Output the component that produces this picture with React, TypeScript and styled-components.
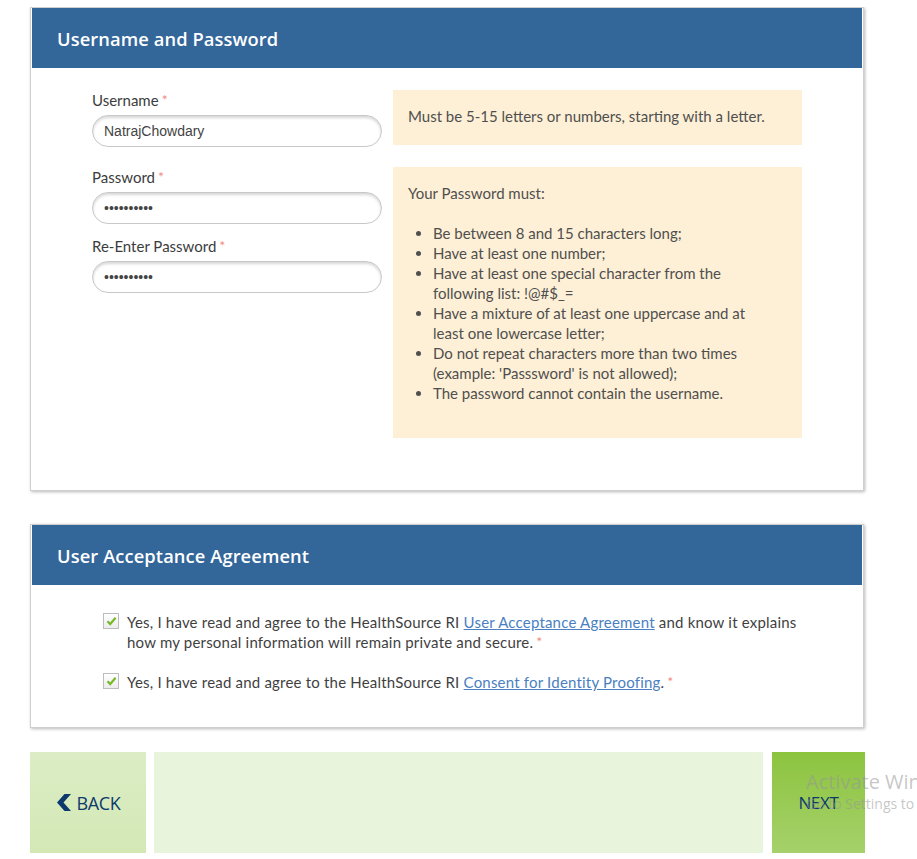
import styled, { createGlobalStyle } from "styled-components";

const GlobalStyle = createGlobalStyle`
  body {
    margin: 7px 0 0 0;
    background: #ffffff;
    font-family: Lato, "Open Sans", sans-serif;
    color: #4a4a4a;
    overflow-x: hidden;
  }
`;

const Page = styled.div`
  position: relative;
  width: 917px;
  padding-left: 30px;
  box-sizing: border-box;
  overflow: hidden;
`;

const Card = styled.section<{ $gap?: number }>`
  width: 834px;
  box-sizing: border-box;
  border: 1px solid #cfcfcf;
  padding: 0 1px 1px 1px;
  background: #fff;
  box-shadow: 1px 1px 3px rgba(0, 0, 0, 0.28);
  margin-bottom: ${({ $gap }) => $gap ?? 0}px;
`;

const CardHeader = styled.h2`
  margin: 0;
  height: 60px;
  display: flex;
  align-items: center;
  padding-left: 25px;
  background: #336699;
  color: #fff;
  font-family: "Open Sans", sans-serif;
  font-weight: 600;
  font-size: 18.3px;
  letter-spacing: 0.1px;
`;

const CardBody = styled.div<{ $pad: string }>`
  padding: ${({ $pad }) => $pad};
`;

const FormRow = styled.div`
  display: flex;
  gap: 11px;
  align-items: flex-start;
  margin-bottom: 20px;
  &:last-child {
    margin-bottom: 0;
  }
`;

const FieldColumn = styled.div`
  width: 290px;
  display: flex;
  flex-direction: column;
`;

const Label = styled.label<{ $top?: number }>`
  display: block;
  font-size: 15px;
  line-height: 20px;
  color: #3c3c3c;
  margin-top: ${({ $top }) => $top ?? 0}px;
  margin-bottom: 5px;
`;

const Required = styled.span`
  color: #f08a80;
  font-size: 14px;
  margin-left: 3px;
  vertical-align: 1px;
`;

const TextInput = styled.input`
  width: 290px;
  height: 32px;
  box-sizing: border-box;
  border: 1px solid #c8c8c8;
  border-radius: 16px;
  padding: 0 11px;
  font-family: "Liberation Sans", Arial, sans-serif;
  font-size: 14px;
  color: #444;
  background: #fff;
  box-shadow: inset 0 2px 3px rgba(0, 0, 0, 0.16);
  outline: none;
`;

const Tip = styled.div<{ $height: number }>`
  width: 409px;
  height: ${({ $height }) => $height}px;
  box-sizing: border-box;
  background: #fef0d6;
  padding: 16px 15px;
  font-size: 15px;
  line-height: 20px;
  color: #4f4f4f;
`;

const TipTitle = styled.p`
  margin: 0 0 20px 0;
`;

const RuleList = styled.ul`
  margin: 0;
  padding: 0 24px 0 25px;
  li {
    line-height: 20px;
  }
`;

const Agreement = styled.div`
  display: flex;
  align-items: flex-start;
  gap: 8px;
  margin-left: 71px;
  margin-bottom: 20px;
  &:last-child {
    margin-bottom: 0;
  }
`;

const CheckBox = styled.span`
  flex: none;
  width: 16px;
  height: 16px;
  margin-top: 1px;
  box-sizing: border-box;
  border: 1px solid #bdbdbd;
  background: linear-gradient(#ffffff, #ececec);
  display: flex;
  align-items: center;
  justify-content: center;
`;

const AgreementText = styled.p`
  margin: 0;
  width: 680px;
  font-size: 15px;
  line-height: 20px;
  letter-spacing: 0.2px;
  color: #3f3f3f;
  a {
    color: #4a7fc1;
    text-decoration: underline;
  }
`;

const Footer = styled.nav`
  display: flex;
  width: 835px;
  height: 101px;
  gap: 8px;
`;

const NavButton = styled.button<{ $primary?: boolean; $width: number }>`
  width: ${({ $width }) => $width}px;
  flex: none;
  border: none;
  padding: 0;
  display: flex;
  align-items: center;
  justify-content: center;
  gap: 4px;
  background: ${({ $primary }) =>
    $primary ? "linear-gradient(#8cc43f, #a6d16b)" : "linear-gradient(#dcedc5, #d3e8b5)"};
  color: #0c3a6c;
  font-family: "Open Sans", sans-serif;
  font-size: ${({ $primary }) => ($primary ? 17 : 18)}px;
  letter-spacing: -0.3px;
`;

const Spacer = styled.div`
  flex: 1;
  background: #e9f4dc;
  margin-right: 1px;
`;

const Watermark = styled.div`
  position: absolute;
  left: 806px;
  top: 762px;
  color: rgba(150, 150, 150, 0.55);
  font-family: "Open Sans", sans-serif;
  white-space: nowrap;
  pointer-events: none;
`;

const WatermarkTitle = styled.div`
  font-size: 20px;
  line-height: 26px;
`;

const WatermarkSub = styled.div`
  font-size: 14px;
  line-height: 18px;
`;

const rules = [
  "Be between 8 and 15 characters long;",
  "Have at least one number;",
  "Have at least one special character from the following list: !@#$_=",
  "Have a mixture of at least one uppercase and at least one lowercase letter;",
  "Do not repeat characters more than two times (example: 'Passsword' is not allowed);",
  "The password cannot contain the username.",
];

const Check = () => (
  <CheckBox>
    <svg width="11" height="10" viewBox="0 0 11 10">
      <path d="M1.5 5.2 L4.2 8 L9.6 1.8" fill="none" stroke="#78b82a" strokeWidth="2.2" />
    </svg>
  </CheckBox>
);

export default function App() {
  return (
    <Page>
      <GlobalStyle />
      <Card $gap={33}>
        <CardHeader>Username and Password</CardHeader>
        <CardBody $pad="22px 0 51px 60px">
          <FormRow>
            <FieldColumn>
              <Label>
                Username<Required>*</Required>
              </Label>
              <TextInput defaultValue="NatrajChowdary" />
            </FieldColumn>
            <Tip $height={55}>Must be 5-15 letters or numbers, starting with a letter.</Tip>
          </FormRow>
          <FormRow>
            <FieldColumn>
              <Label>
                Password<Required>*</Required>
              </Label>
              <TextInput type="password" defaultValue="abcdefghij" />
              <Label $top={12}>
                Re-Enter Password<Required>*</Required>
              </Label>
              <TextInput type="password" defaultValue="abcdefghij" />
            </FieldColumn>
            <Tip $height={271}>
              <TipTitle>Your Password must:</TipTitle>
              <RuleList>
                {rules.map((r) => (
                  <li key={r}>{r}</li>
                ))}
              </RuleList>
            </Tip>
          </FormRow>
        </CardBody>
      </Card>

      <Card $gap={24}>
        <CardHeader>User Acceptance Agreement</CardHeader>
        <CardBody $pad="27px 0 34px 0">
          <Agreement>
            <Check />
            <AgreementText>
              Yes, I have read and agree to the HealthSource RI{" "}
              <a href="#">User Acceptance Agreement</a> and know it explains how my personal
              information will remain private and secure.<Required>*</Required>
            </AgreementText>
          </Agreement>
          <Agreement>
            <Check />
            <AgreementText>
              Yes, I have read and agree to the HealthSource RI{" "}
              <a href="#">Consent for Identity Proofing</a>.<Required>*</Required>
            </AgreementText>
          </Agreement>
        </CardBody>
      </Card>

      <Footer>
        <NavButton $width={116}>
          <svg width="17" height="19" viewBox="0 0 17 19">
            <path d="M9.5 1 L16 1 L8.5 9.5 L16 18 L9.5 18 L2 9.5 Z" fill="#0c3a6c" />
          </svg>
          BACK
        </NavButton>
        <Spacer />
        <NavButton $primary $width={93}>
          NEXT
        </NavButton>
      </Footer>

      <Watermark>
        <WatermarkTitle>Activate Windows</WatermarkTitle>
        <WatermarkSub>Go to Settings to activate Windows.</WatermarkSub>
      </Watermark>
    </Page>
  );
}
